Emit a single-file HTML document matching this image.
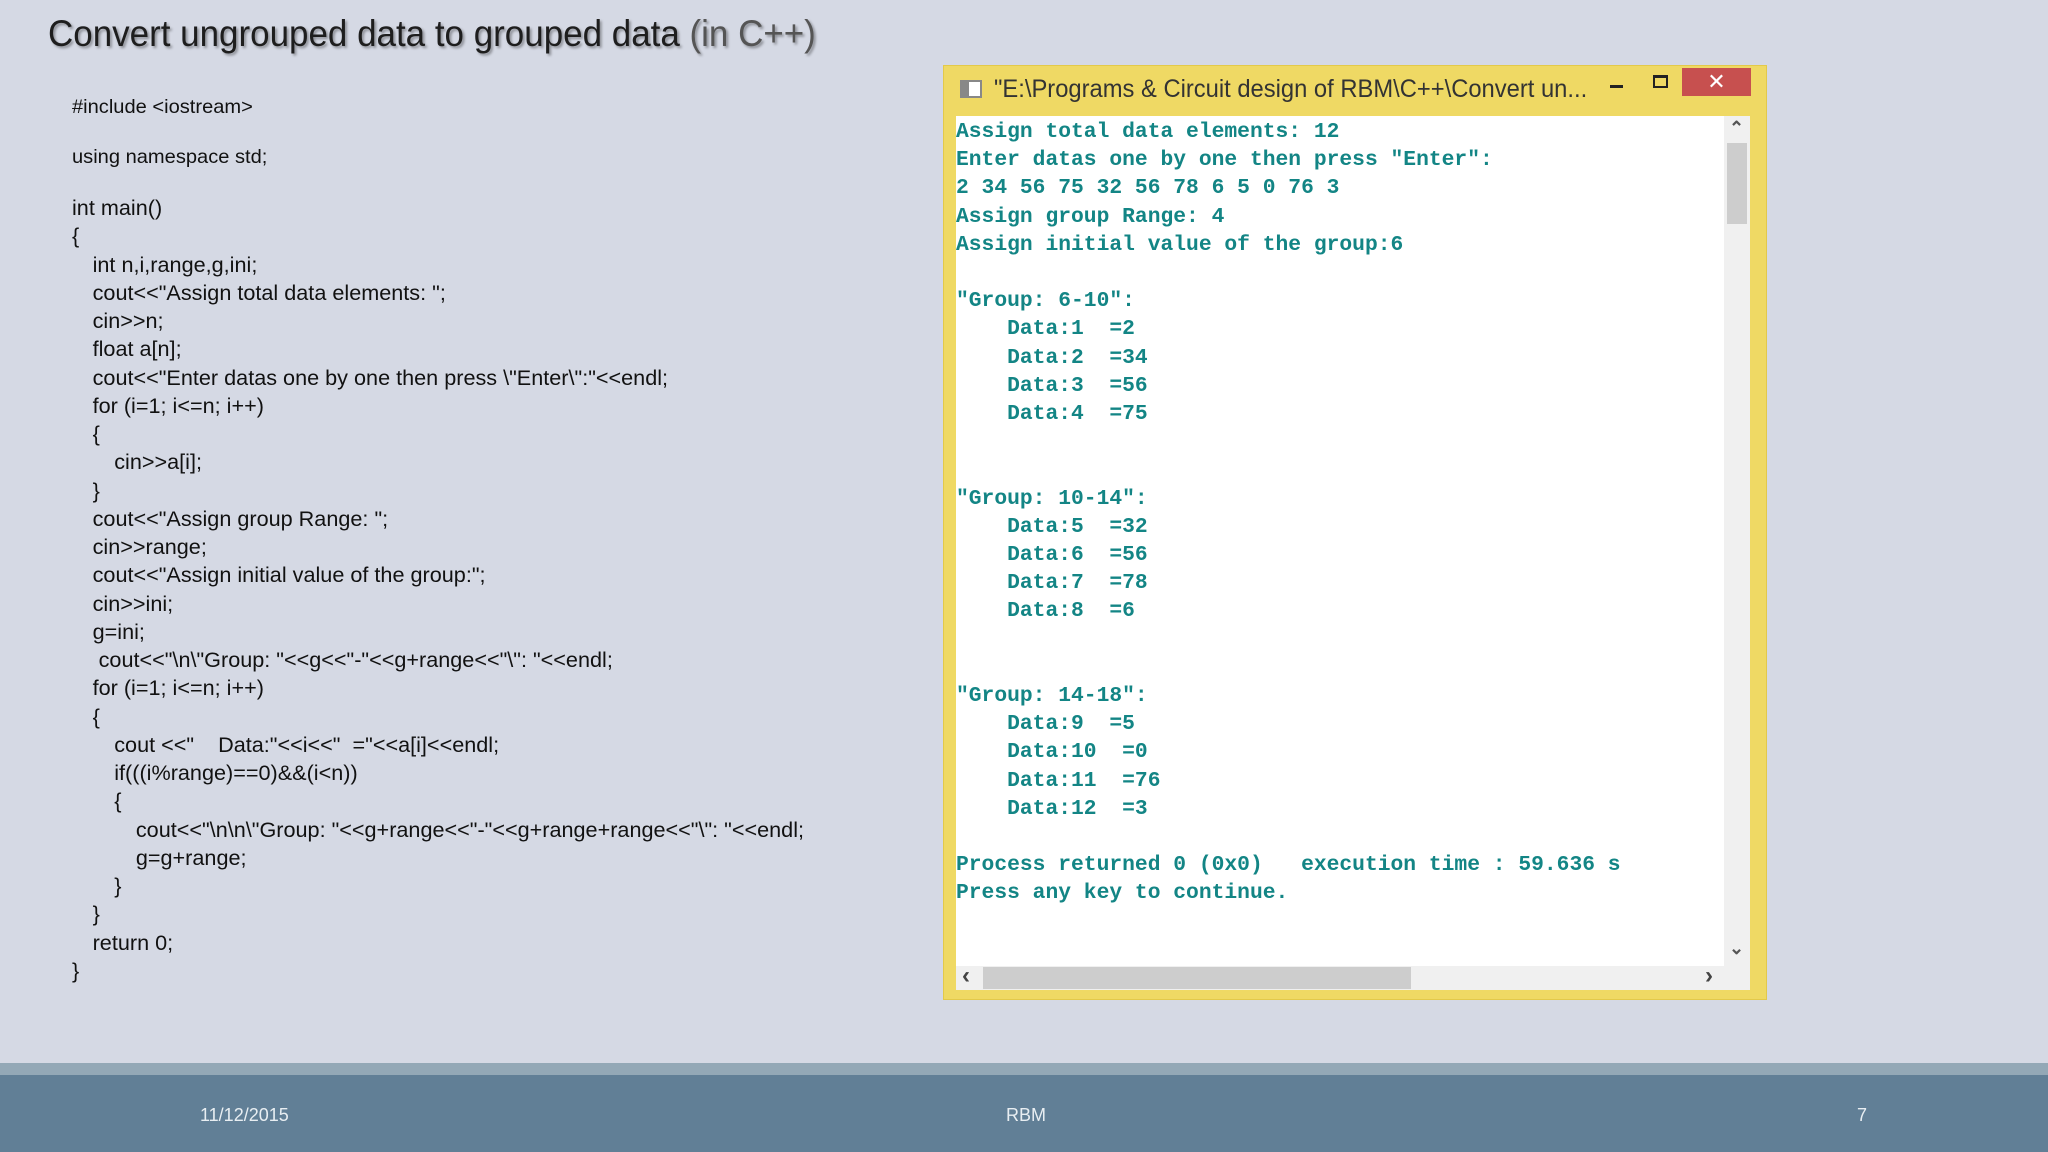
<!DOCTYPE html>
<html><head><meta charset="utf-8"><style>
*{margin:0;padding:0;box-sizing:border-box}
body{width:2048px;height:1152px;background:#d5d9e4;position:relative;overflow:hidden;font-family:"Liberation Sans",sans-serif}
.t{position:absolute;left:48px;top:13px;font-size:37px;color:#1e1e1e;transform:scaleX(0.945);transform-origin:left;white-space:nowrap;text-shadow:2px 2px 3px rgba(0,0,0,.35)}
.t span{color:#555}
.c{position:absolute;white-space:pre;font-size:21px;color:#111;transform:scaleX(1.03);transform-origin:left;line-height:28.25px}
.c i{font-style:normal;display:inline-block}
.i1{padding-left:20px}.i2{padding-left:41px}.i3{padding-left:62px}
.win{position:absolute;left:943px;top:65px;width:824px;height:935px;background:#efd964;border:1px solid #e3c94a}
.con{position:absolute;left:956px;top:116px;width:768px;height:850px;background:#fff}
.con pre{font-family:"Liberation Mono",monospace;font-weight:bold;font-size:21.3px;line-height:28.2px;color:#138585;position:absolute;left:0;top:2px}
.foot{position:absolute;left:0;top:1063px;width:2048px;height:89px;background:#617f96;border-top:12px solid #93a8b6}
.ft{position:absolute;top:1105px;color:#e8eef2;font-size:18px}
</style></head><body>
<div class="t">Convert ungrouped data to grouped data <span>(in C++)</span></div>
<div class="c" style="left:72px;top:93px;font-size:19.5px">#include &lt;iostream&gt;</div>
<div class="c" style="left:72px;top:143px;font-size:19.5px">using namespace std;</div>
<div class="c" style="left:72px;top:195px">int main()
{
<i class="i1">int n,i,range,g,ini;</i>
<i class="i1">cout&lt;&lt;"Assign total data elements: ";</i>
<i class="i1">cin&gt;&gt;n;</i>
<i class="i1">float a[n];</i>
<i class="i1">cout&lt;&lt;"Enter datas one by one then press \"Enter\":"&lt;&lt;endl;</i>
<i class="i1">for (i=1; i&lt;=n; i++)</i>
<i class="i1">{</i>
<i class="i2">cin&gt;&gt;a[i];</i>
<i class="i1">}</i>
<i class="i1">cout&lt;&lt;"Assign group Range: ";</i>
<i class="i1">cin&gt;&gt;range;</i>
<i class="i1">cout&lt;&lt;"Assign initial value of the group:";</i>
<i class="i1">cin&gt;&gt;ini;</i>
<i class="i1">g=ini;</i>
<i class="i1"> cout&lt;&lt;"\n\"Group: "&lt;&lt;g&lt;&lt;"-"&lt;&lt;g+range&lt;&lt;"\": "&lt;&lt;endl;</i>
<i class="i1">for (i=1; i&lt;=n; i++)</i>
<i class="i1">{</i>
<i class="i2">cout &lt;&lt;"    Data:"&lt;&lt;i&lt;&lt;"  ="&lt;&lt;a[i]&lt;&lt;endl;</i>
<i class="i2">if(((i%range)==0)&amp;&amp;(i&lt;n))</i>
<i class="i2">{</i>
<i class="i3">cout&lt;&lt;"\n\n\"Group: "&lt;&lt;g+range&lt;&lt;"-"&lt;&lt;g+range+range&lt;&lt;"\": "&lt;&lt;endl;</i>
<i class="i3">g=g+range;</i>
<i class="i2">}</i>
<i class="i1">}</i>
<i class="i1">return 0;</i>
}</div>
<div class="win"></div>
<div style="position:absolute;left:960px;top:80px;width:22px;height:18px;background:#fff;border:2px solid #888"><div style="width:7px;height:14px;background:#888"></div></div>
<div style="position:absolute;left:994px;top:75px;font-size:25px;color:#333;white-space:nowrap;transform:scaleX(0.95);transform-origin:left">"E:\Programs &amp; Circuit design of RBM\C++\Convert un...</div>
<div style="position:absolute;left:1610px;top:85px;width:13px;height:3px;background:#222"></div>
<div style="position:absolute;left:1653px;top:75px;width:15px;height:13px;border:2px solid #222;border-top-width:3px"></div>
<div style="position:absolute;left:1682px;top:68px;width:69px;height:28px;background:#c7504f;color:#fff;font-size:22px;text-align:center;line-height:28px">✕</div>
<div class="con"><pre>Assign total data elements: 12
Enter datas one by one then press "Enter":
2 34 56 75 32 56 78 6 5 0 76 3
Assign group Range: 4
Assign initial value of the group:6

"Group: 6-10":
    Data:1  =2
    Data:2  =34
    Data:3  =56
    Data:4  =75


"Group: 10-14":
    Data:5  =32
    Data:6  =56
    Data:7  =78
    Data:8  =6


"Group: 14-18":
    Data:9  =5
    Data:10  =0
    Data:11  =76
    Data:12  =3

Process returned 0 (0x0)   execution time : 59.636 s
Press any key to continue.</pre></div>
<div style="position:absolute;left:1724px;top:116px;width:26px;height:850px;background:#f0f0f0"></div>
<div style="position:absolute;left:1727px;top:143px;width:20px;height:81px;background:#cdcdcd"></div>
<div style="position:absolute;left:1729px;top:118px;font-size:18px;font-weight:bold;color:#555">&#8963;</div>
<div style="position:absolute;left:1729px;top:938px;font-size:18px;font-weight:bold;color:#555">&#8964;</div>
<div style="position:absolute;left:956px;top:966px;width:794px;height:24px;background:#f0f0f0"></div>
<div style="position:absolute;left:983px;top:967px;width:428px;height:22px;background:#cdcdcd"></div>
<div style="position:absolute;left:962px;top:962px;font-size:24px;font-weight:bold;color:#444">&#8249;</div>
<div style="position:absolute;left:1705px;top:962px;font-size:24px;font-weight:bold;color:#444">&#8250;</div>
<div class="foot"></div>
<div class="ft" style="left:200px">11/12/2015</div>
<div class="ft" style="left:1006px">RBM</div>
<div class="ft" style="left:1857px">7</div>
</body></html>
